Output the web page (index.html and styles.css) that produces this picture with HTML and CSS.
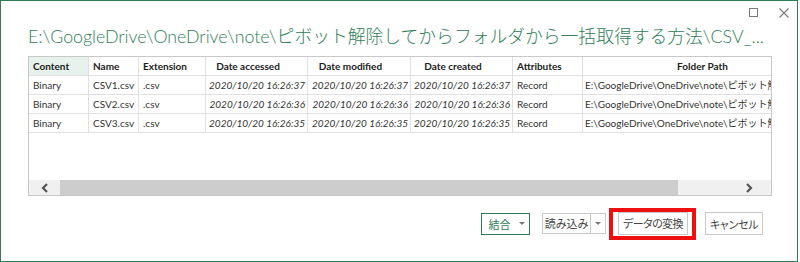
FILE: index.html
```html
<!DOCTYPE html>
<html lang="ja">
<head>
<meta charset="utf-8">
<title>Navigator</title>
<link rel="stylesheet" href="styles.css">
</head>
<body>
<div class="window">
  <div class="titlebar">
    <span class="ctl"><svg width="9" height="9" viewBox="0 0 9 9"><rect x="0.5" y="0.5" width="8" height="8" fill="none" stroke="#7a7a7a" stroke-width="1"/></svg></span>
    <span class="ctl"><svg width="10" height="10" viewBox="0 0 10 10"><path d="M0.5 0.5L9.5 9.5M9.5 0.5L0.5 9.5" stroke="#7a7a7a" stroke-width="1.1" fill="none"/></svg></span>
  </div>
  <h1 class="title">E:\GoogleDrive\OneDrive\note\ピボット解除してからフォルダから一括取得する方法\CSV_...</h1>
  <div class="grid">
    <div class="grid-body">
      <div class="sheet">
        <div class="c hd sel">Content</div>
        <div class="c hd">Name</div>
        <div class="c hd">Extension</div>
        <div class="c hd ctr">Date accessed</div>
        <div class="c hd ctr">Date modified</div>
        <div class="c hd ctr">Date created</div>
        <div class="c hd">Attributes</div>
        <div class="c hd ctr">Folder Path</div>

        <div class="c">Binary</div>
        <div class="c">CSV1.csv</div>
        <div class="c">.csv</div>
        <div class="c dt">2020/10/20 16:26:37</div>
        <div class="c dt">2020/10/20 16:26:37</div>
        <div class="c dt">2020/10/20 16:26:37</div>
        <div class="c">Record</div>
        <div class="c fp">E:\GoogleDrive\OneDrive\note\ピボット解除してからフォルダから一括取得する方法\CSV\</div>

        <div class="c">Binary</div>
        <div class="c">CSV2.csv</div>
        <div class="c">.csv</div>
        <div class="c dt">2020/10/20 16:26:36</div>
        <div class="c dt">2020/10/20 16:26:36</div>
        <div class="c dt">2020/10/20 16:26:36</div>
        <div class="c">Record</div>
        <div class="c fp">E:\GoogleDrive\OneDrive\note\ピボット解除してからフォルダから一括取得する方法\CSV\</div>

        <div class="c">Binary</div>
        <div class="c">CSV3.csv</div>
        <div class="c">.csv</div>
        <div class="c dt">2020/10/20 16:26:35</div>
        <div class="c dt">2020/10/20 16:26:35</div>
        <div class="c dt">2020/10/20 16:26:35</div>
        <div class="c">Record</div>
        <div class="c fp">E:\GoogleDrive\OneDrive\note\ピボット解除してからフォルダから一括取得する方法\CSV\</div>
      </div>
    </div>
    <div class="hscroll">
      <span class="sbtn"><svg width="8" height="10" viewBox="0 0 8 10"><path d="M6 1L2 5L6 9" stroke="#555" stroke-width="2.2" fill="none"/></svg></span>
      <span class="thumb"></span>
      <span class="track"></span>
      <span class="sbtn right"><svg width="8" height="10" viewBox="0 0 8 10"><path d="M2 1L6 5L2 9" stroke="#555" stroke-width="2.2" fill="none"/></svg></span>
    </div>
  </div>
  <div class="actions">
    <button class="btn combine">結合<span class="caret"></span></button>
    <div class="split">
      <button class="btn load">読み込み</button>
      <button class="btn drop"><span class="caret"></span></button>
    </div>
    <div class="highlight">
      <button class="btn transform">データの変換</button>
    </div>
    <button class="btn cancel">キャンセル</button>
  </div>
</div>
</body>
</html>
```
FILE: styles.css
```css
html, body {
  margin: 0;
  padding: 0;
  background: #ffffff;
}

.window {
  width: 798px;
  height: 262px;
  box-sizing: border-box;
  border: 1px solid #2f7d55;
  padding: 0 25px 0 27px;
  display: flex;
  flex-direction: column;
  font-family: "Lato", "Noto Sans CJK JP", sans-serif;
  overflow: hidden;
}

.titlebar {
  height: 22px;
  box-sizing: border-box;
  padding-top: 7px;
  margin-right: -17px;
  display: flex;
  justify-content: flex-end;
  align-items: flex-start;
  gap: 21px;
}

.ctl {
  display: flex;
  line-height: 0;
}

.title {
  margin: 1px 0 8px 0;
  height: 24px;
  line-height: 24px;
  font-size: 17.8px;
  font-weight: 300;
  color: #2f8059;
  white-space: nowrap;
  font-family: "Lato", "Noto Sans CJK JP", sans-serif;
}

.grid {
  height: 140px;
  box-sizing: border-box;
  border: 1px solid #c8c8c8;
  display: flex;
  flex-direction: column;
}

.grid-body {
  flex: 1;
  overflow: hidden;
  background: #fff;
}

.sheet {
  display: grid;
  grid-template-columns: 60px 50px 67px 102px 103px 102px 70px 257px;
  grid-auto-rows: 19px;
  width: 811px;
  font-size: 10px;
  color: #333;
}

.c {
  box-sizing: border-box;
  border-right: 1px solid #e0e0e0;
  border-bottom: 1px solid #e0e0e0;
  padding: 0 2px 0 4px;
  line-height: 18px;
  white-space: nowrap;
  overflow: hidden;
}

.hd {
  font-weight: 700;
  color: #222;
}

.hd.sel {
  background: #e6f2eb;
}

.hd.ctr {
  text-align: center;
  padding: 0 17px 0 0;
}

.dt {
  font-style: italic;
  text-align: right;
  padding: 0 2px 0 0;
}

.fp {
  padding-left: 2px;
}

.hscroll {
  height: 15px;
  display: flex;
  background: #f0f0f0;
}

.sbtn {
  width: 31px;
  display: flex;
  align-items: center;
  justify-content: center;
}

.sbtn.right {
  width: 45px;
}

.thumb {
  width: 618px;
  background: #cdcdcd;
}

.track {
  flex: 1;
}

.actions {
  margin-top: 11px;
  margin-right: 9px;
  display: flex;
  justify-content: flex-end;
  align-items: center;
  height: 33px;
}

.btn {
  font-family: "Noto Sans CJK JP", sans-serif;
  font-size: 11px;
  font-feature-settings: "palt";
  color: #444;
  background: #fff;
  border: 1px solid #c9c9c9;
  height: 22px;
  padding: 0;
  margin: 0;
  display: flex;
  align-items: center;
  justify-content: center;
  box-sizing: border-box;
}

.caret {
  display: inline-block;
  width: 0;
  height: 0;
  border-left: 3px solid transparent;
  border-right: 3px solid transparent;
  border-top: 3px solid #777;
}

.combine {
  width: 49px;
  border-color: #2f7d55;
  color: #2f7d55;
  gap: 8px;
  padding-left: 2px;
  margin-right: 12px;
}

.split {
  display: flex;
  margin-right: 3px;
}

.load {
  width: 49px;
  height: 21px;
  align-items: flex-start;
  padding-top: 1px;
}

.drop {
  width: 15px;
  height: 21px;
  border-left: none;
}

.highlight {
  display: flex;
  border: 4px solid #ee1010;
  padding: 0 4px 1px 5px;
  margin-right: 9px;
}

.transform {
  width: 70px;
  height: 23px;
  letter-spacing: -0.6px;
}

.cancel {
  width: 58px;
  height: 23px;
  letter-spacing: -0.3px;
}
```
